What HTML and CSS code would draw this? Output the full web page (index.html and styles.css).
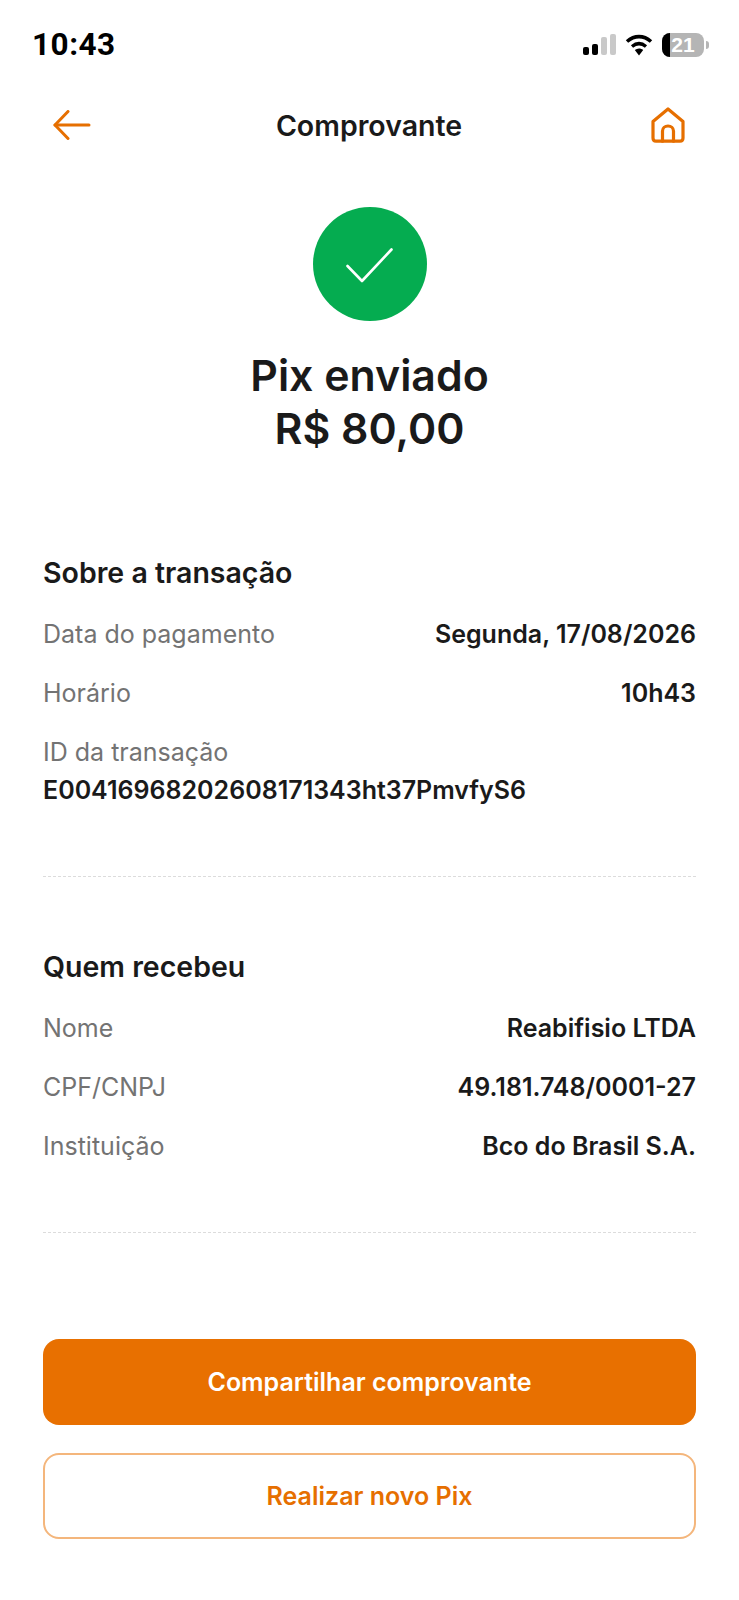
FILE: index.html
```html
<!DOCTYPE html>
<html lang="pt-BR">
<head>
<meta charset="UTF-8">
<meta name="viewport" content="width=device-width, initial-scale=1.0">
<title>Comprovante</title>
<link rel="stylesheet" href="styles.css">
</head>
<body>
<div class="main">
    <div class="status_bar">
        <span class="time">10:43</span>
        <div class="status_icons">
            <svg width="33" height="21" viewBox="0 0 33 21">
                <rect x="0" y="13" width="6" height="8" rx="2" fill="#000"/>
                <rect x="9" y="10" width="6" height="11" rx="2" fill="#000"/>
                <rect x="18" y="3" width="6" height="18" rx="2" fill="#c9c9c9"/>
                <rect x="27" y="0" width="6" height="21" rx="2" fill="#c9c9c9"/>
            </svg>
            <svg width="28" height="22" viewBox="0 0 28 22">
                <path d="M2 7.5C9.5 1 18.5 1 26 7.5" fill="none" stroke="#000" stroke-width="3.6"/>
                <path d="M7 12.5C11.5 8.8 16.5 8.8 21 12.5" fill="none" stroke="#000" stroke-width="3.4"/>
                <path d="M9.8 16L14 21.5L18.2 16C15.6 14 12.4 14 9.8 16Z" fill="#000"/>
            </svg>
            <div class="battery">
                <div class="battery_body">
                    <span class="battery_fill"></span>
                    <span class="battery_num">21</span>
                </div>
                <span class="battery_tip"></span>
            </div>
        </div>
    </div>

    <header class="nav">
        <svg width="38" height="30" viewBox="0 0 38 30" fill="none" stroke="#e66f00" stroke-width="3" stroke-linecap="round" stroke-linejoin="round">
            <path d="M36 15H2"/>
            <path d="M15 1.5L2 15L15 28.5"/>
        </svg>
        <h1 class="nav_title">Comprovante</h1>
        <svg width="34" height="36" viewBox="0 0 34 36" fill="none" stroke="#e66f00" stroke-width="3.2" stroke-linecap="round" stroke-linejoin="round">
            <path d="M2 14.5L17 2L32 14.5V31C32 33.2 31 34.2 29 34.2H5C3 34.2 2 33.2 2 31Z"/>
            <path d="M11.5 34.2V24C11.5 21 14 19 17 19C20 19 22.5 21 22.5 24V34.2"/>
        </svg>
    </header>

    <section class="hero">
        <div class="check_circle">
            <svg width="47" height="35" viewBox="0 0 47 35" fill="none" stroke="#fff" stroke-width="2.6" stroke-linecap="round" stroke-linejoin="round">
                <path d="M1.5 18L16 33L45.5 1.5"/>
            </svg>
        </div>
        <h2 class="hero_title">Pix enviado<br>R$ 80,00</h2>
    </section>

    <section class="block first">
        <h3 class="block_title">Sobre a transação</h3>
        <div class="row"><span class="label">Data do pagamento</span><span class="value">Segunda, 17/08/2026</span></div>
        <div class="row"><span class="label">Horário</span><span class="value">10h43</span></div>
        <div class="stack">
            <span class="label">ID da transação</span>
            <span class="value">E00416968202608171343ht37PmvfyS6</span>
        </div>
    </section>

    <section class="block second">
        <h3 class="block_title">Quem recebeu</h3>
        <div class="row"><span class="label">Nome</span><span class="value">Reabifisio LTDA</span></div>
        <div class="row"><span class="label">CPF/CNPJ</span><span class="value">49.181.748/0001-27</span></div>
        <div class="row"><span class="label">Instituição</span><span class="value">Bco do Brasil S.A.</span></div>
    </section>

    <div class="actions">
        <button class="btn btn_primary">Compartilhar comprovante</button>
        <button class="btn btn_outline">Realizar novo Pix</button>
    </div>
</div>
</body>
</html>
```

FILE: styles.css
```css
* {
    margin: 0;
    padding: 0;
    box-sizing: border-box;
    font-family: Inter, "Liberation Sans", sans-serif;
}

body {
    background: #ffffff;
    color: #1a1a1a;
}

.main {
    width: 739px;
    height: 1600px;
    overflow: hidden;
}

.status_bar {
    height: 60px;
    padding: 29px 30px 0 32px;
    display: flex;
    justify-content: space-between;
    align-items: center;
}

.time {
    font-family: Roboto, "Liberation Sans", sans-serif;
    font-size: 31.5px;
    font-weight: 700;
    color: #000000;
    letter-spacing: 0.5px;
}

.status_icons {
    display: flex;
    align-items: center;
    gap: 9px;
}

.battery {
    display: flex;
    align-items: center;
    gap: 2px;
}

.battery_body {
    position: relative;
    width: 42px;
    height: 24px;
    border-radius: 8px;
    background: #b5b5b5;
    overflow: hidden;
    text-align: center;
}

.battery_fill {
    position: absolute;
    left: 0;
    top: 0;
    width: 8px;
    height: 24px;
    background: #000000;
}

.battery_num {
    position: relative;
    font-family: "Liberation Sans", sans-serif;
    font-size: 21px;
    font-weight: 700;
    line-height: 24px;
    color: #ffffff;
}

.battery_tip {
    width: 3px;
    height: 8px;
    border-radius: 0 3px 3px 0;
    background: #b5b5b5;
}

.nav {
    margin-top: 30px;
    height: 70px;
    padding: 0 54px 0 53px;
    display: flex;
    justify-content: space-between;
    align-items: center;
}

.nav_title {
    margin-right: 4px;
    font-size: 28.5px;
    font-weight: 600;
    color: #1a1a1a;
}

.hero {
    margin-top: 47px;
    display: flex;
    flex-direction: column;
    align-items: center;
}

.check_circle {
    width: 114px;
    height: 114px;
    padding-top: 3px;
    border-radius: 50%;
    background: #05ac50;
    display: flex;
    align-items: center;
    justify-content: center;
}

.hero_title {
    margin-top: 28px;
    font-size: 42.8px;
    font-weight: 600;
    line-height: 53px;
    text-align: center;
    color: #1a1a1a;
}

.block {
    margin: 0 43px;
    border-bottom: 1px dashed #dcdcdc;
}

.first {
    margin-top: 100px;
    height: 322px;
}

.second {
    margin-top: 72px;
    height: 284px;
}

.block_title {
    font-size: 28.5px;
    font-weight: 600;
    line-height: 36px;
    color: #1a1a1a;
    margin-bottom: 24.5px;
}

.row {
    height: 59px;
    display: flex;
    justify-content: space-between;
    font-size: 25px;
    line-height: 36px;
}

.stack {
    margin-top: -1px;
    display: flex;
    flex-direction: column;
    font-size: 25px;
    line-height: 38px;
}

.label {
    color: #737373;
}

.value {
    font-weight: 600;
    color: #1a1a1a;
}

.actions {
    margin: 106px 43px 0;
    display: flex;
    flex-direction: column;
    gap: 28px;
}

.btn {
    height: 86px;
    border-radius: 16px;
    font-size: 25px;
    font-weight: 600;
    background: #ffffff;
}

.btn_primary {
    background: #e87000;
    border: none;
    color: #ffffff;
}

.btn_outline {
    border: 2px solid #f4b67c;
    color: #e66f00;
}
```
